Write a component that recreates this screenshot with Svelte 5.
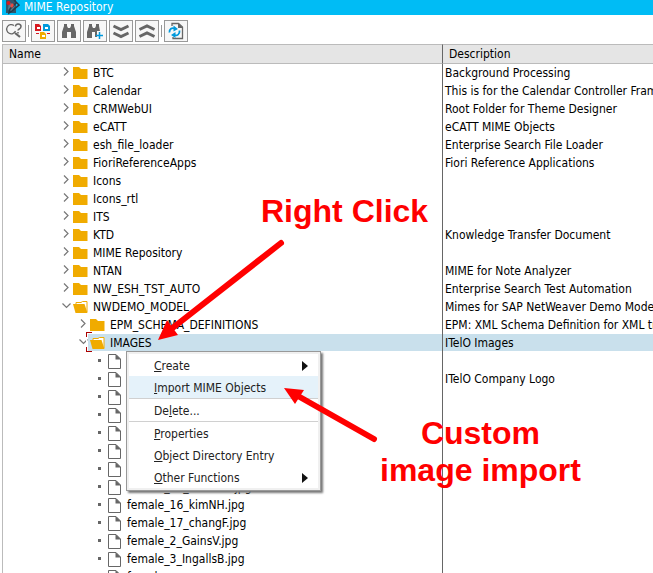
<script>
  const rows = [
    ['BTC', 'Background Processing'],
    ['Calendar', 'This is for the Calendar Controller Framework'],
    ['CRMWebUI', 'Root Folder for Theme Designer'],
    ['eCATT', 'eCATT MIME Objects'],
    ['esh_file_loader', 'Enterprise Search File Loader'],
    ['FioriReferenceApps', 'Fiori Reference Applications'],
    ['Icons', ''],
    ['Icons_rtl', ''],
    ['ITS', ''],
    ['KTD', 'Knowledge Transfer Document'],
    ['MIME Repository', ''],
    ['NTAN', 'MIME for Note Analyzer'],
    ['NW_ESH_TST_AUTO', 'Enterprise Search Test Automation'],
    ['NWDEMO_MODEL', 'Mimes for SAP NetWeaver Demo Model', 0, 'open'],
    ['EPM_SCHEMA_DEFINITIONS', 'EPM: XML Schema Definition for XML translation', 1],
    ['IMAGES', 'ITelO Images', 1, 'open', true],
    ['', '', 2, 'file'],
    ['', 'ITelO Company Logo', 2, 'file'],
    ['', '', 2, 'file'],
    ['', '', 2, 'file'],
    ['', '', 2, 'file'],
    ['', '', 2, 'file'],
    ['', '', 2, 'file'],
    ['female_15_brandtS.jpg', '', 2, 'file'],
    ['female_16_kimNH.jpg', '', 2, 'file'],
    ['female_17_changF.jpg', '', 2, 'file'],
    ['female_2_GainsV.jpg', '', 2, 'file'],
    ['female_3_IngallsB.jpg', '', 2, 'file'],
    ['female_', '', 2, 'file']
  ].map(([name, desc, level = 0, kind = 'closed', selected = false]) => ({ name, desc, level, kind, selected }));

  const menu = [
    { pre: '', key: 'C', post: 'reate', sub: true },
    { pre: '', key: 'I', post: 'mport MIME Objects', active: true },
    { pre: 'De', key: 'l', post: 'ete...', rule: true },
    { pre: '', key: 'P', post: 'roperties', rule: true },
    { pre: '', key: 'O', post: 'bject Directory Entry' },
    { pre: '', key: 'O', post: 'ther Functions', sub: true }
  ];
</script>

<div class="page">
  <header class="title">
    <svg width="16" height="16" viewBox="0 0 16 16" aria-hidden="true">
      <path d="M2 0H12V13H2Z" fill="#31566c" />
      <path d="M5 2 11 6 7 12 4 9Z" fill="#58788a" />
      <path d="M10 0 15 5 8 11 5 13 6 9 12 3" fill="none" stroke="#263a48" stroke-width="1.500" />
      <circle cx="4.500" cy="3" r="2" fill="#d71920" />
      <path d="M8 3 10 5 8 8 6 6Z" fill="#e54b45" />
    </svg>
    <span>MIME Repository</span>
  </header>

  <div class="toolbar" role="toolbar" aria-label="Repository">
    <button aria-label="Display">
      <svg viewBox="0 0 22 20"><g fill="none" stroke="#666"><path d="M11 4.500A4.600 4.600 0 1 0 12.500 10" stroke-width="1.300" /><path d="m12 12 5 4" stroke-width="2.200" /><path d="M12.500 5.500C12.500 2 18 2.500 18 5.500S15 7.500 15 9.500M15 11v1.500" stroke-width="1.500" /></g></svg>
    </button>
    <i></i>
    <button aria-label="Hierarchy">
      <svg viewBox="0 0 22 20"><path d="M3 3h4l2 2v5H3Z" fill="#d71920" /><path d="M5 6h3v2H5Z" fill="#fff" /><path d="M11 3h5l2 2v5h-7Z" fill="#0099dc" /><path d="M13 6h3v2h-3Z" fill="#fff" /><path d="M8 11h4l2 2v5H8Z" fill="#f0ab00" /><path d="M10 14h3v2h-3Z" fill="#fff" /><path d="M4 12.500h3M15 12.500h3" stroke="#d71920" /></svg>
    </button>
    <button aria-label="Find">
      <svg viewBox="0 0 22 20"><path d="M6 3h3v2l1 2h2l1-2V3h3v2l2 6v6h-5v-6H9v6H4v-6l2-6Z" fill="#666" /></svg>
    </button>
    <button aria-label="Find next">
      <svg viewBox="0 0 22 20"><path d="M5 3h3v2l1 2h2l1-2V3h3v2l1 5h-3v6h-2v-5H8v6H3v-6l2-6Z" fill="#666" /><path d="M15.500 11v7M12 14.500h7" stroke="#0099dc" stroke-width="1.500" /></svg>
    </button>
    <button aria-label="Expand all">
      <svg viewBox="0 0 22 20"><path d="m3.500 5 7.500 3.500L18.500 5M3.500 12l7.500 3.500 7.500-3.500" fill="none" stroke="#666" stroke-width="3" /></svg>
    </button>
    <button aria-label="Collapse all">
      <svg viewBox="0 0 22 20"><path d="M3.500 8.500 11 5l7.500 3.500M3.500 15.500 11 12l7.500 3.500" fill="none" stroke="#666" stroke-width="3" /></svg>
    </button>
    <i></i>
    <button aria-label="Refresh">
      <svg viewBox="0 0 22 20"><path d="M7 5V2.500h6.500L17.500 6v11.500H8V16" fill="none" stroke="#666" stroke-width="1.300" /><path d="M13 2v5h5Z" fill="#666" /><path d="M4.500 11.500C4 8 7 6.500 9.500 7.500M14.500 9.500c.5 4-2.500 5.500-5 4.500" fill="none" stroke="#0099dc" stroke-width="1.800" /><path d="M8.500 4.500 13 8 8.500 10.500ZM10.500 11 6 14l4.500 3Z" fill="#0099dc" /></svg>
    </button>
  </div>

  <main>
    <table>
      <thead>
        <tr><th class="name">Name</th><th>Description</th></tr>
      </thead>
      <tbody>
        {#each rows as row}
          <tr class:selected={row.selected}>
            <td class="name">
              <div class="node level{row.level}">
                {#if row.kind === 'file'}
                  <span class="dot"></span>
                  <svg class="icon" width="16" height="16" viewBox="0 0 16 16" aria-hidden="true"><path d="M1.500 1.500H9L13.500 6V15.500H1.500Z" fill="#fff" stroke="#666" /><path d="M8.500 1V6.500H14Z" fill="#666" /></svg>
                {:else}
                  <button class="toggle" aria-label="Toggle {row.name}">
                    <svg width="9" height="9" viewBox="0 0 9 9"><path d={row.kind === 'open' ? 'M.5 2.500 4.500 6.500 8.500 2.500' : 'M2 .5 6 4.500 2 8.500'} fill="none" stroke="#777" stroke-width="1.200" /></svg>
                  </button>
                  <svg class="icon" width="16" height="16" viewBox="0 0 16 16" aria-hidden="true">
                    {#if row.kind === 'open'}
                      <path d="M3 5V3.500H8L9.500 2.500H14V13" fill="#fff" stroke="#f0ab00" /><path d="M0 5H11.500L14.500 14H2.500Z" fill="#f0ab00" />
                    {:else}
                      <path d="M0 2H6L8 4H14.500V14H0Z" fill="#f0ab00" />
                    {/if}
                  </svg>
                {/if}
                <div class="label">{row.name}</div>
                {#if row.selected}<span class="corners"></span>{/if}
              </div>
            </td>
            <td>{row.desc}</td>
          </tr>
        {/each}
      </tbody>
    </table>
  </main>

  <div class="menu" role="menu">
    {#each menu as item}
      <button role="menuitem" class:active={item.active} class:rule={item.rule}>
        <span>{item.pre}<u>{item.key}</u>{item.post}</span>
        {#if item.sub}<svg width="6" height="10" viewBox="0 0 6 10" aria-hidden="true"><path d="M0 0 6 5 0 10Z" fill="#111" /></svg>{/if}
      </button>
    {/each}
  </div>

  <svg class="arrows" width="400" height="460" aria-hidden="true">
    <g stroke="#f00" stroke-width="6" stroke-linecap="round"><path d="M281 243 170 330" /><path d="M374 439 298 396" /></g>
    <path d="m158 340 9-20 11 15ZM284 388l20 2-9 14Z" fill="#f00" />
  </svg>
  <div class="note click">Right Click</div>
  <div class="note import">Custom<br />image import</div>
</div>

<style>
  :global(body) { margin: 0; background: #fff; }
  .page {
    position: relative;
    display: flex;
    flex-direction: column;
    height: 100vh;
    overflow: hidden;
    font: 12px/18px "DejaVu Sans Condensed", Tahoma, "DejaVu Sans", sans-serif;
    color: #000;
  }
  .title {
    display: flex;
    flex: none;
    gap: 4px;
    height: 15px;
    margin-left: 2px;
    padding-left: 2px;
    background: #00bcf5;
    color: #fff;
    line-height: 14px;
  }
  .toolbar {
    display: flex;
    flex: none;
    align-items: center;
    gap: 2px;
    padding: 5px 2px 2px;
  }
  .toolbar button {
    box-sizing: border-box;
    width: 24px;
    height: 22px;
    padding: 0;
    border: 1px solid #999;
    background: #f7f7f7;
  }
  .toolbar svg { display: block; width: 22px; height: 20px; }
  .toolbar i { width: 1px; height: 12px; background: #999; }
  main { flex: 1; min-height: 0; overflow: hidden; margin-left: 2px; border-left: 1px solid #bbb; }
  table { width: 100%; table-layout: fixed; border-collapse: separate; border-spacing: 0; }
  th {
    height: 18px;
    padding: 0 6px;
    border-top: 1px solid #bbb;
    border-bottom: 1px solid #bbb;
    background: #e5e5e5;
    font-weight: normal;
    text-align: left;
  }
  .name { width: 439px; border-right: 1px solid #666; }
  th.name { box-sizing: border-box; width: 440px; }
  td { height: 17px; padding: 1px 0 0 2px; line-height: 17px; white-space: nowrap; overflow: hidden; }
  td.name { padding: 0 0 1px; }
  .node { position: relative; display: flex; align-items: center; height: 17px; padding-left: 58px; }
  .level1 { padding-left: 75px; }
  .level2 { padding-left: 92px; }
  .toggle { align-self: flex-start; width: 12px; height: 15px; padding: 0 1px; border: 0; background: none; }
  .toggle svg { display: block; }
  .dot { box-sizing: border-box; width: 12px; height: 3px; border-left: 3px solid #666; margin-left: 3px; margin-right: -3px; }
  .icon { flex: none; }
  .label { margin: 2px 0 0 4px; }
  .selected td { background: linear-gradient(#c9e0ec, #c9e0ec) 0 0 / 100% 17px no-repeat; }
  .selected .name { background-position: 85px 0; }
  .selected td, .selected .node { overflow: visible; }
  .corners {
    position: absolute;
    left: 83px;
    top: -2px;
    width: 5px;
    height: 20px;
    border-left: 1px solid #a00;
    background: linear-gradient(#a00, #a00) 0 0 / 5px 1px no-repeat, linear-gradient(#a00, #a00) 0 100% / 5px 1px no-repeat;
  }
  .corners::after { content: ""; position: absolute; left: -1px; top: 5px; width: 1px; height: 10px; background: #fff; }
  .menu {
    position: absolute;
    left: 126px;
    top: 351px;
    box-sizing: border-box;
    width: 195px;
    padding: 2px;
    border: 1px solid #999;
    background: #f0f0f0;
    box-shadow: 2px 2px 2px #777;
  }
  .menu button {
    box-sizing: border-box;
    display: flex;
    align-items: center;
    justify-content: space-between;
    width: 100%;
    height: 22px;
    padding: 2px 10px 0 25px;
    border: 0;
    background: #fff;
    color: #222;
    font: inherit;
    text-align: left;
  }
  .menu .active { background: #e5f2fa; }
  .menu .rule { height: 23px; border-top: 1px solid #d0d0d0; }
  .arrows { position: absolute; left: 0; top: 0; pointer-events: none; }
  .note { position: absolute; color: #f00; font: bold 32px/37px "Liberation Sans", Arial, sans-serif; text-align: center; white-space: nowrap; }
  .click { left: 261px; top: 193px; }
  .import { left: 380px; top: 415px; }
</style>
